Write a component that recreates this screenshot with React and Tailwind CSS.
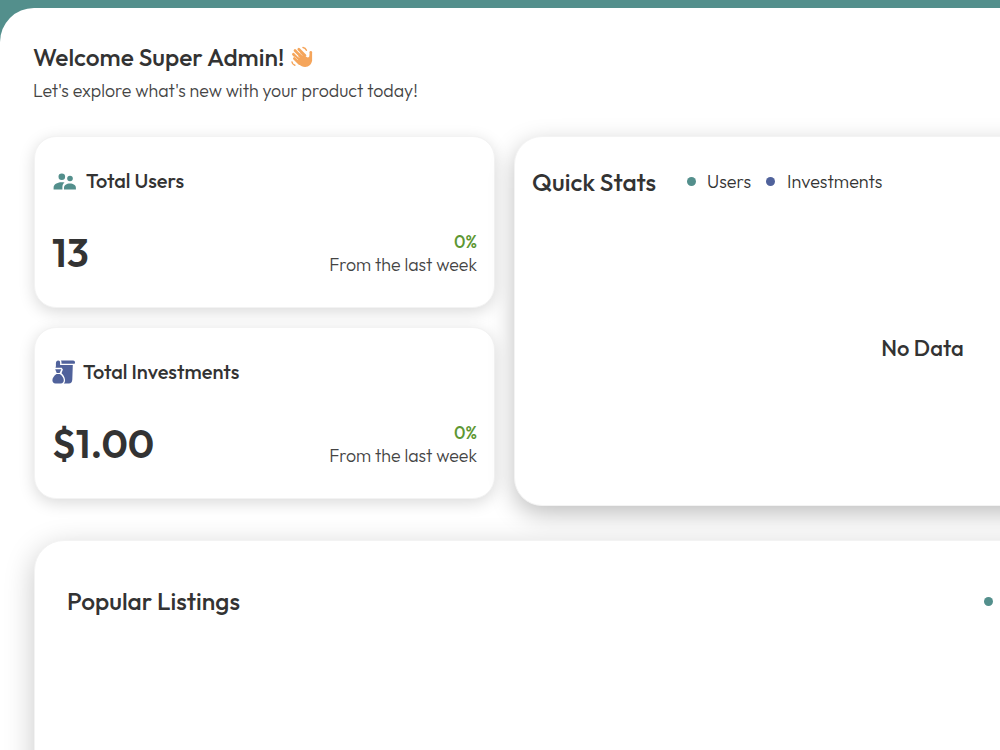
const WaveIcon = () => (
  <svg className="h-[22px] w-[22px] shrink-0" viewBox="0 0 22 22" fill="none" stroke="#f5a55b" strokeLinecap="round">
    <path d="M7.800 3.200l6.200 6.200M4 4.500l8 8M2.400 8.200l7.500 7.500M3.400 12.500l5 5" strokeWidth="2.700" />
    <path d="M19.800 6.200v8" strokeWidth="2.600" />
    <path
      d="M9 6l6.600 5.100c1.300.9 2.900.2 3.100-1.500l.7-3.600L21 7v7c0 4-3 6.900-6.900 6.900-2.500 0-4.300-1-5.700-2.400l-3-3.200z"
      fill="#f5a55b"
      stroke="none"
    />
    <path d="M6.800 5l4.200 4.200M4.200 7.700l4 4M3.700 10.800l3 3" stroke="#fff" strokeWidth=".5" />
    <path d="M12 1.500c1.600.2 2.800 1.200 3.400 2.700M1 16c.2 1.600 1.200 2.800 2.800 3.300" strokeWidth="1.500" />
  </svg>
);

const UsersIcon = () => (
  <svg className="h-[17px] w-[24px] shrink-0" viewBox="0 0 24 17" fill="#538f8c">
    <circle cx="9.800" cy="3.700" r="3.300" />
    <circle cx="18" cy="5.500" r="2.800" />
    <path d="M1.600 16.400v-1.700C1.600 11.500 5 9.200 9.600 9.200c1 0 2 .1 2.900.3-1.500 1.300-2.100 2.800-2.100 4.600v2.300z" />
    <path d="M12 16.400v-1.500c0-2.700 2.500-4.300 5.900-4.300s6 1.600 6 4.300v1.500z" />
  </svg>
);

const InvestmentIcon = () => (
  <svg className="h-[24px] w-[24px] shrink-0" viewBox="0 0 24 24" fill="#50629b">
    <path d="M3.500 7.800c.6-1.200.4-2.500.4-4C3.900 1.600 4.900.5 6.200.5c1.400 0 1.900.9 1.900 2.200v2.200h12.700l-.5 14.500c-.1 2.500-1.300 4-3.400 4h-5.100c1-1.100 1.400-2.400 1.200-4-.3-2.400-1.700-4.600-3.500-6.200l1.400-3.600-1.200-1.800z" />
    <path d="M9 .5h12.100c1.300 0 1.900.8 1.900 2 0 .8-.3 1.300-.9 1.300H9.500c.1-1.200 0-2.300-.5-3.300z" />
    <path d="M3.200 9.300h6.100l-1.700 3.800H4.700z" />
    <path d="M4.500 13.900h3.300c2.400 1.600 4 4 4 6.300 0 2-1.100 3.200-3 3.200H3.500c-2 0-3.100-1.200-3.100-3.200 0-2.300 1.700-4.700 4.100-6.300z" />
  </svg>
);

const StatCard = ({ icon, title, titleClass, value }) => (
  <div className="flex h-[172px] flex-col rounded-[22px] border border-[#f3f3f3] bg-white px-[17px] shadow-[0_4px_16px_rgba(0,0,0,0.15)]">
    <div className="mt-[30px] flex h-7 items-center">
      {icon}
      <h3 className={`whitespace-nowrap text-[20px] font-medium text-[#333] ${titleClass}`}>{title}</h3>
    </div>
    <div className="mt-[31px] flex h-[52px] items-center justify-between">
      <span className="text-[40px] leading-none font-semibold text-[#333]">{value}</span>
      <div className="mt-px flex flex-col items-end">
        <span className="text-[17.500px] leading-[23px] font-medium text-[#5d9732]">0%</span>
        <span className="text-[17.800px] leading-[23px] font-light text-[#444]">From the last week</span>
      </div>
    </div>
  </div>
);

const Dot = ({ className }) => <span className={`h-[9px] w-[9px] shrink-0 rounded-full ${className}`} />;

export default function App() {
  return (
    <div className="h-[750px] w-[1000px] overflow-hidden bg-[#538f8c] pt-2 font-['Outfit','Lato',sans-serif]">
      <main className="h-[742px] rounded-tl-[34px] bg-white pt-[33px] pl-[34px]">
        <header className="-ml-px">
          <div className="flex h-8 items-center gap-[7px]">
            <h1 className="whitespace-nowrap text-[24.500px] font-medium text-[#333]">Welcome Super Admin!</h1>
            <WaveIcon />
          </div>
          <p className="h-[33px] text-[17.800px] leading-[35px] font-light text-[#444]">
            Let's explore what's new with your product today!
          </p>
        </header>

        <section className="mt-[30px] flex h-[370px] w-[1340px] gap-[19px]">
          <div className="flex w-[461px] flex-col gap-[19px]">
            <StatCard icon={<UsersIcon />} title="Total Users" titleClass="ml-[10px]" value="13" />
            <StatCard icon={<InvestmentIcon />} title="Total Investments" titleClass="ml-[7px]" value="$1.00" />
          </div>

          <div className="flex h-[370px] w-[817px] flex-col rounded-[28px] border border-[#f3f3f3] bg-white px-[17px] shadow-[0_8px_24px_rgba(0,0,0,0.25)]">
            <div className="mt-[28px] flex h-8 items-center text-[18px] font-light text-[#333]">
              <h2 className="w-[155px] pt-[2px] whitespace-nowrap text-[24.500px] font-medium text-[#333]">Quick Stats</h2>
              <Dot className="bg-[#538f8c]" />
              <span className="ml-[11px] w-[59px]">Users</span>
              <Dot className="bg-[#50629b]" />
              <span className="ml-[12px]">Investments</span>
            </div>
            <p className="mt-[135px] text-center text-[22px] leading-8 font-medium text-[#333]">No Data</p>
          </div>
        </section>

        <section className="mt-[34px] h-[400px] w-[1298px] rounded-[30px] border border-[#f3f3f3] bg-white px-[32px] pt-[44px] shadow-[0_8px_30px_rgba(0,0,0,0.22)]">
          <div className="flex h-8 items-center">
            <h2 className="w-[917px] text-[24.500px] font-medium text-[#333]">Popular Listings</h2>
            <Dot className="bg-[#538f8c]" />
          </div>
        </section>
      </main>
    </div>
  );
}
